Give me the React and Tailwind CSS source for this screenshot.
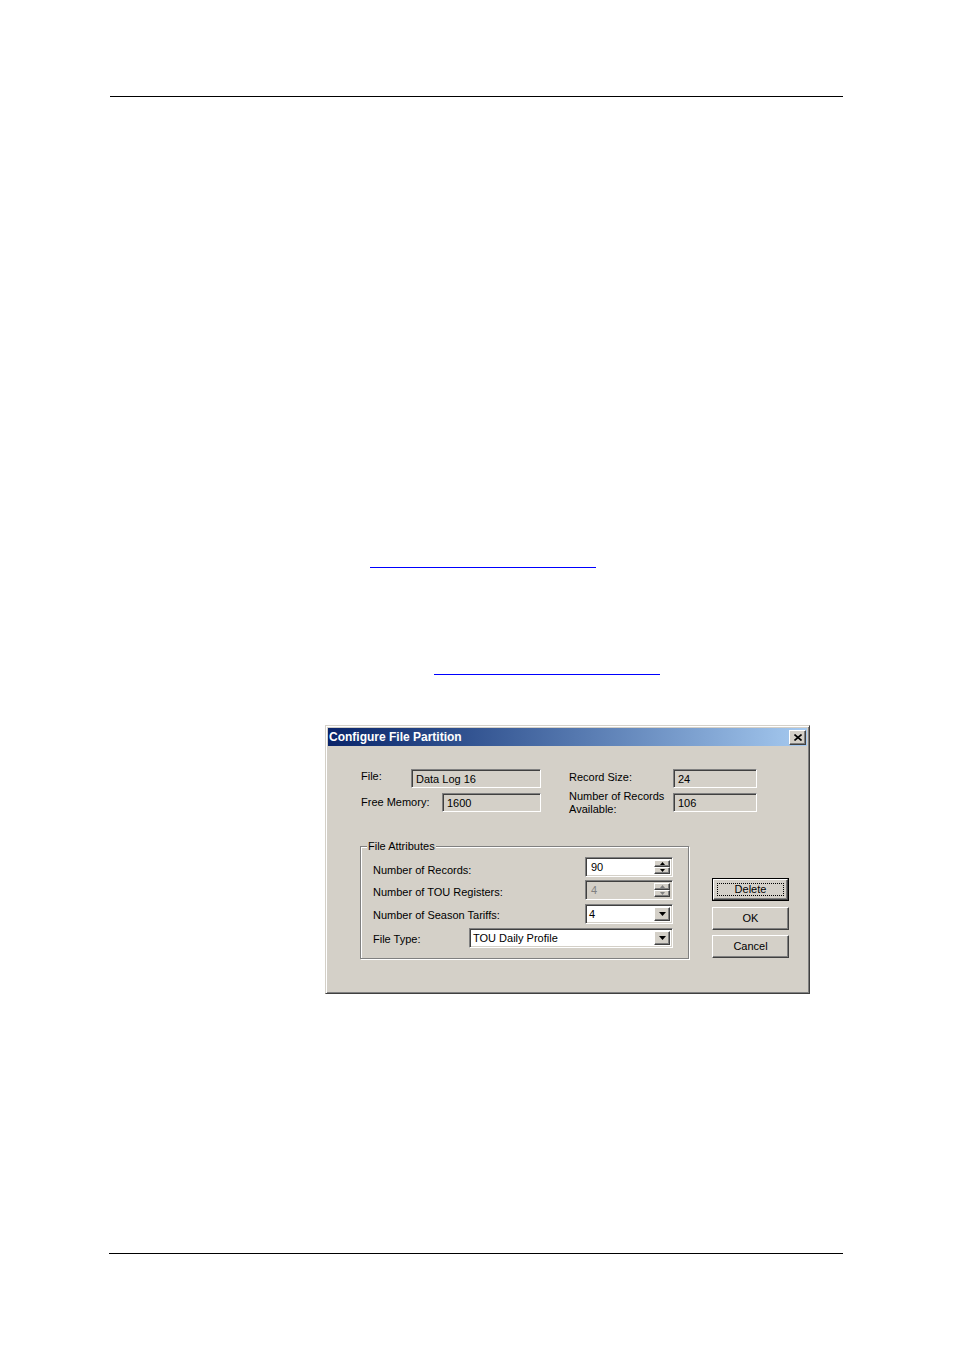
import React from 'react';

const face = "font-['Liberation_Sans',Arial,sans-serif]";
const raised =
  'border border-t-white border-l-white border-b-[#404040] border-r-[#404040] shadow-[inset_-1px_-1px_0_#808080,inset_1px_1px_0_#d4d0c8] bg-[#d4d0c8]';
const sunken =
  'border border-t-[#808080] border-l-[#808080] border-b-white border-r-white shadow-[inset_1px_1px_0_#404040,inset_-1px_-1px_0_#d4d0c8]';

function Field({ width, value, pad = 'pl-[4px]' }) {
  return (
    <div className={`${sunken} ${width} h-[19px] bg-[#d4d0c8] flex items-center ${pad} pt-[1px]`}>
      {value}
    </div>
  );
}

function Arrow({ w = 7, h = 4, color = '#000' }) {
  return (
    <svg width={w} height={h} viewBox={`0 0 ${w} ${h}`}>
      <polygon points={`0,0 ${w},0 ${w / 2},${h}`} fill={color} />
    </svg>
  );
}

function Spin({ value, disabled }) {
  const c = disabled ? '#808080' : '#000';
  return (
    <div
      className={`${sunken} w-[88px] h-[20px] flex items-stretch p-[2px] ${
        disabled ? 'bg-[#d4d0c8] text-[#808080]' : 'bg-white'
      }`}
    >
      <div className="flex-1 flex items-center pl-[3px] pt-[1px]">{value}</div>
      <div className="w-[16px] flex flex-col">
        <div className={`${raised} h-[8px] flex items-center justify-center`}>
          <svg width="5" height="3" viewBox="0 0 5 3">
            <polygon points="2.5,0 5,3 0,3" fill={c} />
          </svg>
        </div>
        <div className={`${raised} h-[8px] flex items-center justify-center`}>
          <svg width="5" height="3" viewBox="0 0 5 3">
            <polygon points="0,0 5,0 2.5,3" fill={c} />
          </svg>
        </div>
      </div>
    </div>
  );
}

function Combo({ width, value }) {
  return (
    <div className={`${sunken} ${width} h-[20px] flex items-stretch p-[2px] bg-white`}>
      <div className="flex-1 flex items-center pl-[1px] pt-[1px]">{value}</div>
      <div className={`${raised} w-[16px] flex items-center justify-center`}>
        <Arrow />
      </div>
    </div>
  );
}

function Button({ label, isDefault }) {
  if (isDefault) {
    return (
      <div className="w-[77px] h-[23px] border border-black">
        <div className={`${raised} w-full h-full p-[3px]`}>
          <div className="w-full h-full border border-dotted border-black flex items-center justify-center">
            {label}
          </div>
        </div>
      </div>
    );
  }
  return (
    <div className={`${raised} w-[77px] h-[23px] flex items-center justify-center`}>{label}</div>
  );
}

function Dialog() {
  return (
    <div className="w-[485px] h-[269px] bg-[#d4d0c8] border border-t-[#d4d0c8] border-l-[#d4d0c8] border-b-[#404040] border-r-[#404040] shadow-[inset_1px_1px_0_#fff,inset_-1px_-1px_0_#808080] p-[2px]">
      <div className="h-[18px] bg-linear-to-r from-[#0a246a] to-[#a6caf0] flex items-center justify-between">
        <span className="pl-[1px] text-white font-bold text-[12px]">Configure File Partition</span>
        <div className={`${raised} w-[17px] h-[15px] mr-[1px] flex items-center justify-center`}>
          <svg width="8" height="7" viewBox="0 0 8 7">
            <path d="M0.5 0.5 L7.5 6.5 M7.5 0.5 L0.5 6.5" stroke="#000" strokeWidth="1.6" />
          </svg>
        </div>
      </div>

      <div className="pl-[32px] pt-[23px]">
        <div className="flex ml-[1px]">
          <div className="w-[208px]">
            <div className="flex items-start">
              <span className="w-[50px] pt-[1px]">File:</span>
              <Field width="w-[130px]" value="Data Log 16" />
            </div>
            <div className="flex items-start mt-[5px]">
              <span className="w-[81px] pt-[3px]">Free Memory:</span>
              <Field width="w-[99px]" value="1600" />
            </div>
          </div>
          <div>
            <div className="flex items-start">
              <span className="w-[104px] pt-[2px]">Record Size:</span>
              <Field width="w-[84px]" value="24" />
            </div>
            <div className="flex items-start mt-[5px] h-[19px]">
              <div className="w-[104px] -mt-[3px] h-[22px]">
                Number of Records
                <br />
                Available:
              </div>
              <Field width="w-[84px]" value="106" />
            </div>
          </div>
        </div>

        <div className="flex items-start mt-[34px]">
          <div className="relative w-[329px] h-[113px] border border-[#808080] shadow-[1px_1px_0_#fff,inset_1px_1px_0_#fff] pt-[10px] pl-[12px] pr-[15px]">
            <span className="absolute left-[6px] top-[-7px] px-[1px] bg-[#d4d0c8]">File Attributes</span>
            <div className="flex items-center justify-between h-[20px]">
              <span className="mt-[6px]">Number of Records:</span>
              <Spin value="90" />
            </div>
            <div className="flex items-center justify-between h-[20px] mt-[3px]">
              <span className="mt-[5px]">Number of TOU Registers:</span>
              <Spin value="4" disabled />
            </div>
            <div className="flex items-center justify-between h-[20px] mt-[4px]">
              <span className="mt-[2px]">Number of Season Tariffs:</span>
              <Combo width="w-[88px]" value="4" />
            </div>
            <div className="flex items-center justify-between h-[20px] mt-[4px]">
              <span className="mt-[2px]">File Type:</span>
              <Combo width="w-[204px]" value="TOU Daily Profile" />
            </div>
          </div>

          <div className="ml-[23px] mt-[32px] flex flex-col">
            <Button label="Delete" isDefault />
            <div className="mt-[6px]">
              <Button label="OK" />
            </div>
            <div className="mt-[5px]">
              <Button label="Cancel" />
            </div>
          </div>
        </div>
      </div>
    </div>
  );
}

export default function App() {
  return (
    <div className={`w-[955px] h-[1350px] bg-white ${face} text-[11px] leading-[13px] text-black`}>
      <div className="pt-[96px]">
        <div className="ml-[110px] w-[733px] h-px bg-black" />
        <div className="mt-[470px] ml-[370px] w-[226px] h-px bg-[#0000ff]" />
        <div className="mt-[106px] ml-[434px] w-[226px] h-px bg-[#0000ff]" />
        <div className="mt-[50px] ml-[325px]">
          <Dialog />
        </div>
        <div className="mt-[259px] ml-[109px] w-[734px] h-px bg-black" />
      </div>
    </div>
  );
}
